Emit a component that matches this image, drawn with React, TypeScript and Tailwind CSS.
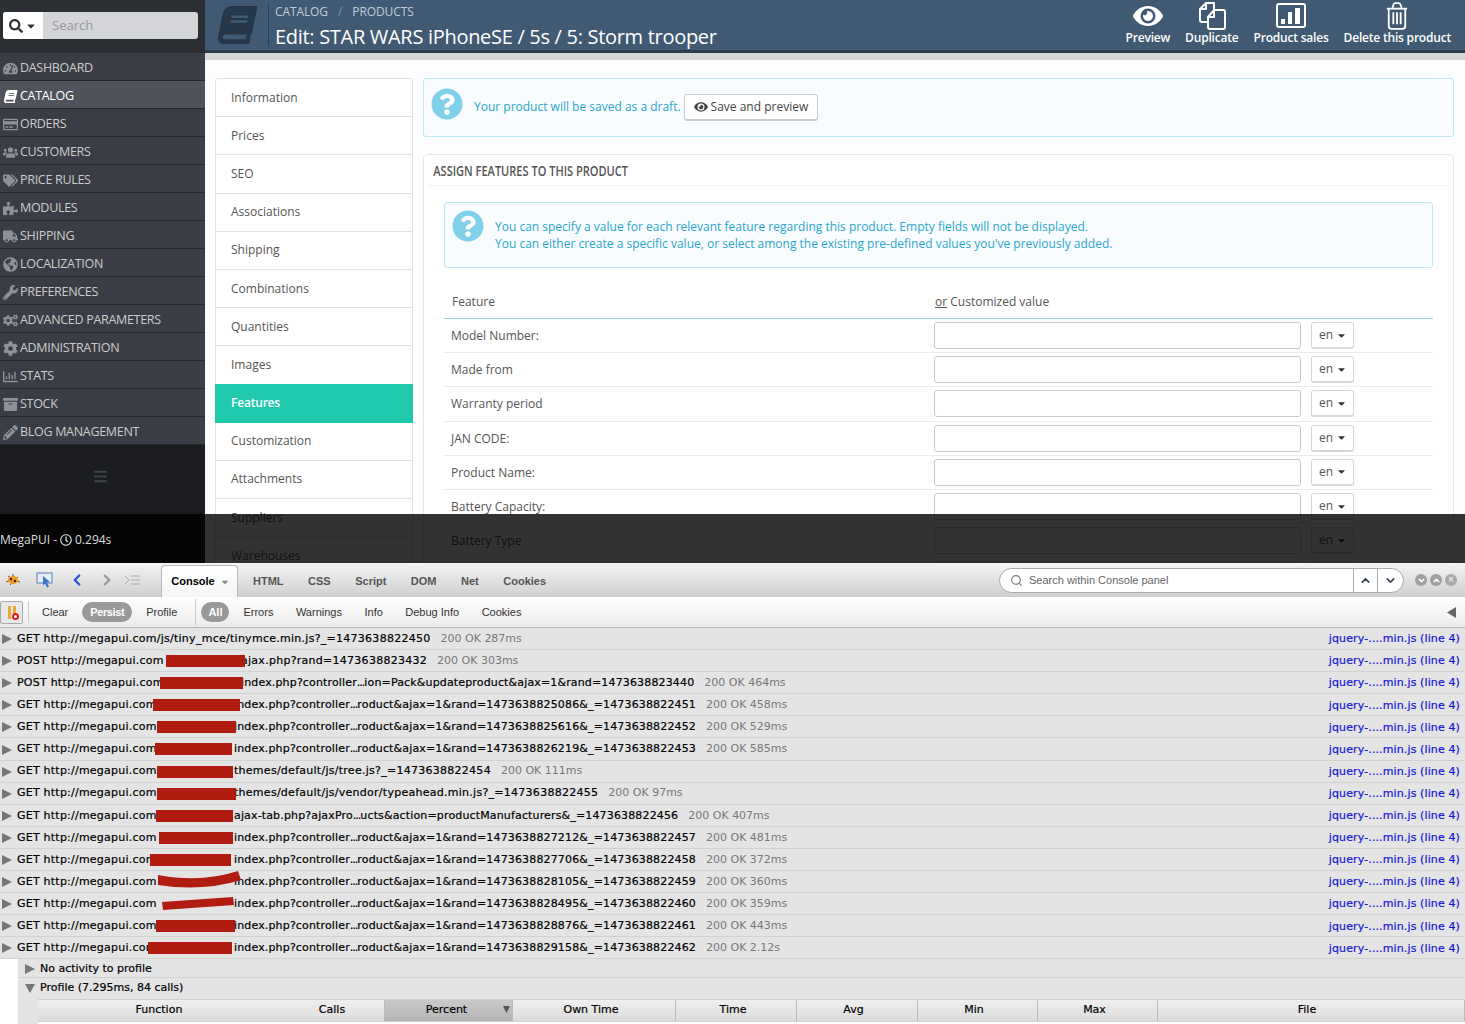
import { FaBook, FaCaretDown, FaCog, FaCogs, FaEye, FaGlobeAmericas, FaPencilAlt, FaPuzzlePiece, FaQuestionCircle, FaRegClock, FaRegCreditCard, FaSearch, FaTachometerAlt, FaTags, FaTruck, FaUsers, FaWrench, FaArchive, FaRegChartBar, FaBars } from 'react-icons/fa';
import { Search, ChevronUp, ChevronDown, ChevronLeft, ChevronRight } from 'lucide-react';

const navItems = [
  { label: 'Dashboard', icon: FaTachometerAlt },
  { label: 'Catalog', icon: FaBook, active: true },
  { label: 'Orders', icon: FaRegCreditCard },
  { label: 'Customers', icon: FaUsers },
  { label: 'Price rules', icon: FaTags },
  { label: 'Modules', icon: FaPuzzlePiece },
  { label: 'Shipping', icon: FaTruck },
  { label: 'Localization', icon: FaGlobeAmericas },
  { label: 'Preferences', icon: FaWrench },
  { label: 'Advanced parameters', icon: FaCogs },
  { label: 'Administration', icon: FaCog },
  { label: 'Stats', icon: FaRegChartBar },
  { label: 'Stock', icon: FaArchive },
  { label: 'Blog management', icon: FaPencilAlt },
];

const tabs = ['Information', 'Prices', 'SEO', 'Associations', 'Shipping', 'Combinations', 'Quantities', 'Images', 'Features', 'Customization', 'Attachments', 'Suppliers', 'Warehouses'];

const features = ['Model Number:', 'Made from', 'Warranty period', 'JAN CODE:', 'Product Name:', 'Battery Capacity:', 'Battery Type', ''];

type LogRow = {
  method: 'GET' | 'POST';
  path: string;
  status: string;
  red?: [number, number];
  scribble?: 'curve' | 'slant';
};

const logRows: LogRow[] = [
  { method: 'GET', path: '/js/tiny_mce/tinymce.min.js?_=1473638822450', status: '200 OK 287ms' },
  { method: 'POST', path: 'ajax.php?rand=1473638823432', status: '200 OK 303ms', red: [166, 245] },
  { method: 'POST', path: 'index.php?controller...ion=Pack&updateproduct&ajax=1&rand=1473638823440', status: '200 OK 464ms', red: [160, 243] },
  { method: 'GET', path: 'index.php?controller...roduct&ajax=1&rand=1473638825086&_=1473638822451', status: '200 OK 458ms', red: [153, 240] },
  { method: 'GET', path: 'index.php?controller...roduct&ajax=1&rand=1473638825616&_=1473638822452', status: '200 OK 529ms', red: [157, 236] },
  { method: 'GET', path: 'index.php?controller...roduct&ajax=1&rand=1473638826219&_=1473638822453', status: '200 OK 585ms', red: [155, 232] },
  { method: 'GET', path: 'themes/default/js/tree.js?_=1473638822454', status: '200 OK 111ms', red: [157, 233] },
  { method: 'GET', path: 'themes/default/js/vendor/typeahead.min.js?_=1473638822455', status: '200 OK 97ms', red: [157, 236] },
  { method: 'GET', path: 'ajax-tab.php?ajaxPro...ucts&action=productManufacturers&_=1473638822456', status: '200 OK 407ms', red: [156, 233] },
  { method: 'GET', path: 'index.php?controller...roduct&ajax=1&rand=1473638827212&_=1473638822457', status: '200 OK 481ms', red: [159, 233] },
  { method: 'GET', path: 'index.php?controller...roduct&ajax=1&rand=1473638827706&_=1473638822458', status: '200 OK 372ms', red: [150, 231] },
  { method: 'GET', path: 'index.php?controller...roduct&ajax=1&rand=1473638828105&_=1473638822459', status: '200 OK 360ms', scribble: 'curve' },
  { method: 'GET', path: 'index.php?controller...roduct&ajax=1&rand=1473638828495&_=1473638822460', status: '200 OK 359ms', scribble: 'slant' },
  { method: 'GET', path: 'index.php?controller...roduct&ajax=1&rand=1473638828876&_=1473638822461', status: '200 OK 443ms', red: [156, 235] },
  { method: 'GET', path: 'index.php?controller...roduct&ajax=1&rand=1473638829158&_=1473638822462', status: '200 OK 2.12s', red: [148, 232] },
];

function Triangle({ down }: { down?: boolean }) {
  return (
    <svg viewBox="0 0 10 10" width="10" height="10" className="shrink-0 fill-[#777]">
      <polygon points={down ? '0,1 10,1 5,10' : '0,0 10,5 0,10'} />
    </svg>
  );
}

function ActionIcon({ kind }: { kind: 'copy' | 'sales' | 'trash' }) {
  if (kind === 'copy') {
    return (
      <svg viewBox="0 0 30 30" width="30" height="30" fill="none" stroke="white" strokeWidth="2" strokeLinejoin="round">
        <path d="M3 19V8l6-6h8v7" />
        <path d="M9 2v6H3" />
        <path d="M3 19q0 2 2 2h6" />
        <path d="M11 16l6-7h9q2 0 2 2v15q0 2-2 2H13q-2 0-2-2z" />
        <path d="M17 9v7h-6" />
      </svg>
    );
  }
  if (kind === 'sales') {
    return (
      <svg viewBox="0 0 30 26" width="30" height="26" fill="none" stroke="white" strokeWidth="2">
        <rect x="1" y="1" width="28" height="23" rx="2" />
        <path d="M5 21v-5h4v5zM12 21V9h4v12zM19 21V5h5v16z" fill="white" stroke="none" />
      </svg>
    );
  }
  return (
    <svg viewBox="0 0 24 30" width="22" height="28" fill="none" stroke="white" strokeWidth="2" strokeLinejoin="round">
      <path d="M1 7h22" />
      <path d="M7 6l1-3q.5-2 2-2h4q1.500 0 2 2l1 3" />
      <path d="M3 7v19q0 3 3 3h12q3 0 3-3V7" />
      <path d="M8 11v13M12 11v13M16 11v13" />
    </svg>
  );
}

function Sidebar() {
  return (
    <aside className="flex w-[205px] shrink-0 flex-col bg-[#1a1c20]">
      <div className="flex h-[53px] items-center bg-[#2b2e33] pb-[2px] pl-[3px]">
        <div className="flex h-[27px] w-[195px] overflow-hidden rounded-[3px] bg-[#d3d5d8]">
          <div className="flex w-[40px] items-center justify-center gap-0.5 bg-white text-[#333]">
            <FaSearch className="size-[14px]" />
            <FaCaretDown className="size-[12px]" />
          </div>
          <span className="pl-[9px] text-[13px] leading-[26px] text-[#999]">Search</span>
        </div>
      </div>
      <nav>
        {navItems.map(({ label, icon: Icon, active }) => (
          <div
            key={label}
            className={`flex h-[28px] items-center border-b border-[#22252a] pt-[3px] uppercase ${active ? 'bg-[#50535c] text-white' : 'bg-[#3a3d45] text-[#ccc]'}`}
          >
            <span className={`flex w-[20px] justify-center ${active ? 'text-white' : 'text-[#8f9196]'}`}>
              <Icon className={active ? 'size-[13px] -skew-x-12' : 'size-[15px]'} />
            </span>
            <span className="text-[12.500px] font-normal tracking-[-0.3px]">{label}</span>
          </div>
        ))}
      </nav>
      <div className="flex justify-center pt-[24px] pr-[5px] text-[#3f4247]">
        <FaBars className="size-[15px]" />
      </div>
    </aside>
  );
}

function PageHeader() {
  return (
    <header>
      <div className="flex h-[50px] items-center bg-[#3f5a72] pr-[14px] text-white">
        <div className="flex w-[63px] justify-center text-[#253748]">
          <FaBook className="size-[38px] -skew-x-12" />
        </div>
        <div className="h-[42px] border-l border-[#2a3f52] pl-[6px]">
          <div className="flex gap-[10px] text-[12px] leading-[16px] tracking-[-0.1px] text-[#c3ccd4] uppercase">
            <span>Catalog</span>
            <span className="text-[#7b8fa1]">/</span>
            <span>Products</span>
          </div>
          <h1 className="mt-[3px] text-[20px] leading-[28px] tracking-[-0.3px]">Edit: STAR WARS iPhoneSE / 5s / 5: Storm trooper</h1>
        </div>
        <div className="ml-auto flex items-end gap-[15px] pb-[4px] text-[12px] font-semibold tracking-[-0.2px]">
          <div className="flex flex-col items-center">
            <FaEye className="h-[30px] w-[30px]" />
            <span className="leading-[14px]">Preview</span>
          </div>
          <div className="flex flex-col items-center">
            <ActionIcon kind="copy" />
            <span className="leading-[14px]">Duplicate</span>
          </div>
          <div className="flex flex-col items-center">
            <ActionIcon kind="sales" />
            <span className="mt-[2px] leading-[14px]">Product sales</span>
          </div>
          <div className="flex flex-col items-center">
            <ActionIcon kind="trash" />
            <span className="mt-[1px] leading-[14px]">Delete this product</span>
          </div>
        </div>
      </div>
      <div className="h-[3px] bg-[#2c3e4f]" />
      <div className="h-[7px] bg-[#d5d6d8]" />
    </header>
  );
}

function TabList() {
  return (
    <div className="w-[198px] shrink-0 self-start rounded-t-[3px] border border-[#e0e3e5] bg-white">
      {tabs.map((t) => (
        <div
          key={t}
          className={`-mx-px flex items-center border-b pl-[16px] text-[12px] ${t === 'Features' ? '-mt-px h-[39.200px] border-[#20c9ac] bg-[#20c9ac] font-semibold tracking-[-0.2px] text-white' : 'h-[38.200px] border-[#e0e3e5] text-[#555]'}`}
        >
          {t}
        </div>
      ))}
    </div>
  );
}

function FeaturesPanel() {
  return (
    <div className="min-w-0 flex-1">
      <div className="flex h-[59px] items-center rounded-[3px] border border-[#bfe8f3] bg-[#f8fcfe] pl-[7px] text-[12px] text-[#2ba6cf]">
        <FaQuestionCircle className="mb-[8px] size-[32px] text-[#81d0ea]" />
        <span className="mb-[1px] ml-[11px]">Your product will be saved as a draft.</span>
        <button className="ml-[3px] flex h-[27px] items-center gap-[3px] rounded-[3px] border border-[#ccc] border-b-2 bg-white px-[9px] text-[#444]">
          <FaEye className="size-[14px] text-[#444]" />
          Save and preview
        </button>
      </div>
      <section className="mt-[17px] rounded-[5px] border border-[#e5e8ea] bg-white px-[4px] pb-[40px]">
        <h2 className="h-[30px] origin-left scale-x-[.76] pl-[7px] text-[14.500px] leading-[32px] font-semibold whitespace-nowrap text-[#555] uppercase">
          Assign features to this product
        </h2>
        <div className="border-t border-[#eef0f1] px-[16px] pt-[16px]">
          <div className="flex h-[66px] rounded-[3px] border border-[#bfe8f3] bg-[#f8fcfe] pt-[7px] pl-[7px] text-[12px] leading-[17px] text-[#2ba6cf]">
            <FaQuestionCircle className="size-[32px] shrink-0 text-[#81d0ea]" />
            <p className="ml-[11px] pt-[8px]">
              You can specify a value for each relevant feature regarding this product. Empty fields will not be displayed.
              <br />
              You can either create a specific value, or select among the existing pre-defined values you've previously added.
            </p>
          </div>
          <div className="mt-[18px] flex h-[33px] items-center border-b border-[#9dd3ea] text-[12px] text-[#555]">
            <span className="w-[483px] pl-[8px]">Feature</span>
            <span className="pl-[8px]"><u>or</u> Customized value</span>
          </div>
          {features.map((f, i) => (
            <div key={i} className="flex h-[34.200px] items-center border-b border-[#ebeded] text-[12px] text-[#555]">
              <span className="w-[490px] pt-[1px] pl-[7px]">{f}</span>
              <input className="h-[27px] w-[367px] rounded-[3px] border border-[#c7c9cb] bg-white" aria-label={f} />
              <button className="ml-[10px] flex h-[27px] w-[43px] items-center justify-center gap-[3px] rounded-[3px] border border-[#d5d7d8] border-b-2 bg-white pl-[1px] text-[#555]">
                {f && 'en'} {f && <FaCaretDown className="size-[11px] text-[#333]" />}
              </button>
            </div>
          ))}
        </div>
      </section>
    </div>
  );
}

function BugIcon() {
  return (
    <svg viewBox="0 0 16 14" width="16" height="14">
      <path d="M1 9l4-2M3 3l3 2M8 1v3M13 4l-3 2M15 9l-4-1M5 12l2-2" stroke="#7a4a14" strokeWidth="1" />
      <ellipse cx="8" cy="7" rx="5" ry="4" fill="#f09a1e" />
      <circle cx="6" cy="6" r="1.200" fill="#3a2006" />
      <circle cx="10" cy="8" r="1.200" fill="#3a2006" />
    </svg>
  );
}

function FirebugBars() {
  const tabNames = ['HTML', 'CSS', 'Script', 'DOM', 'Net', 'Cookies'];
  const filters = ['Errors', 'Warnings', 'Info', 'Debug Info', 'Cookies'];
  return (
    <>
      <div className="flex h-[34px] items-end bg-gradient-to-b from-[#f5f5f5] to-[#cfcfcf] font-['Liberation_Sans',sans-serif] text-[11px]">
        <div className="flex h-[34px] w-[161px] items-center pl-[5px]">
          <BugIcon />
          <svg viewBox="0 0 18 16" width="18" height="16" className="ml-[15px]">
            <rect x="1" y="1" width="15" height="10" fill="#e6edf7" stroke="#5a7fb8" />
            <path d="M7 4l7 6-3 .500 2 4-2 1-2-4-2 2z" fill="#3d76c9" />
          </svg>
          <ChevronLeft className="ml-[14px] size-[18px] text-[#2259c7]" strokeWidth={3} />
          <ChevronRight className="ml-[12px] size-[18px] text-[#999]" strokeWidth={3} />
          <svg viewBox="0 0 16 10" width="16" height="10" className="ml-[8px] stroke-[#aaa]" fill="none">
            <path d="M1 1l4 4-4 4M7 1h9M7 5h9M7 9h9" />
          </svg>
        </div>
        <div className="flex h-[32px] w-[77px] items-center justify-center gap-[5px] rounded-t-[4px] border border-b-0 border-[#bbb] bg-gradient-to-b from-white to-[#f6f6f6] pl-[2px] font-bold text-black">
          Console
          <FaCaretDown className="size-[10px] text-[#888]" />
        </div>
        <div className="flex h-[34px] items-center gap-[24.500px] pt-[2px] pl-[15px] font-bold text-[#555]">
          {tabNames.map((t) => (
            <span key={t}>{t}</span>
          ))}
        </div>
        <div className="ml-auto flex h-[34px] items-center">
          <div className="flex h-[25px] w-[405px] items-center rounded-full border border-[#aaa] bg-white">
            <Search className="ml-[10px] size-[13px] text-[#777]" />
            <span className="ml-[6px] text-[#666]">Search within Console panel</span>
            <span className="ml-auto flex h-full w-[25px] items-center justify-center border-x border-[#aaa]">
              <ChevronUp className="size-[13px] text-[#345]" strokeWidth={3} />
            </span>
            <span className="flex h-full w-[25px] items-center justify-center">
              <ChevronDown className="size-[13px] text-[#345]" strokeWidth={3} />
            </span>
          </div>
          <div className="mr-[8px] ml-[11px] flex gap-[3px]">
            <span className="flex size-[12px] items-center justify-center rounded-full bg-[#a0a0a0]"><ChevronDown className="size-[9px] text-white" strokeWidth={4} /></span>
            <span className="flex size-[12px] items-center justify-center rounded-full bg-[#a0a0a0]"><ChevronUp className="size-[9px] text-white" strokeWidth={4} /></span>
            <span className="flex size-[12px] items-center justify-center rounded-full bg-[#a8a8a8] text-[10px] leading-none text-white">×</span>
          </div>
        </div>
      </div>
      <div className="flex h-[31px] items-center border-b border-[#b5b5b5] bg-gradient-to-b from-white to-[#ebebeb] font-['Liberation_Sans',sans-serif] text-[11px] text-[#333]">
        <div className="flex h-[23px] w-[23px] items-center justify-center gap-[2px] rounded-[2px] border border-[#aaa] bg-[#e8e8e8]">
          <span className="h-[13px] w-[3px] bg-[#eea63a]" />
          <span className="relative h-[13px] w-[3px] bg-[#eea63a]">
            <span className="absolute -bottom-[1px] -left-[1px] size-[7px] rounded-full border-2 border-[#d92020] bg-white" />
          </span>
        </div>
        <span className="ml-[5px] h-[22px] border-l border-[#ccc]" />
        <span className="ml-[13px]">Clear</span>
        <span className="ml-[14px] rounded-full bg-[#999] px-[8px] py-[2px] font-bold tracking-[-0.4px] text-white">Persist</span>
        <span className="ml-[14px]">Profile</span>
        <span className="ml-[18px] h-[26px] border-l border-[#ccc]" />
        <span className="ml-[5px] rounded-full bg-[#999] px-[7px] py-[2px] font-bold text-white">All</span>
        <div className="ml-[14px] flex gap-[22.500px]">
          {filters.map((f) => (
            <span key={f}>{f}</span>
          ))}
        </div>
        <svg viewBox="0 0 10 12" width="9" height="11" className="mr-[9px] ml-auto fill-[#666]">
          <polygon points="10,0 10,12 0,6" />
        </svg>
      </div>
    </>
  );
}

function Redaction({ row }: { row: LogRow }) {
  if (row.scribble === 'curve') {
    return (
      <svg viewBox="0 0 84 22" width="84" height="22" className="absolute top-0 left-[157px]">
        <path d="M1 4Q45 12 81 0L84 9Q45 21 1 14z" fill="#b01c10" />
      </svg>
    );
  }
  if (row.scribble === 'slant') {
    return (
      <svg viewBox="0 0 74 22" width="74" height="22" className="absolute top-0 left-[161px]">
        <path d="M1 9L72 4L73 12L2 17z" fill="#b01c10" />
      </svg>
    );
  }
  if (!row.red) return null;
  return (
    <span
      className="absolute top-[5px] h-[12px] bg-[#b01c10]"
      style={{ left: row.red[0], width: row.red[1] - row.red[0] }}
    />
  );
}

// the "..." in these urls is much narrower in firebug than three dejavu dots
function LogPath({ path }: { path: string }) {
  const parts = path.split('...');
  if (parts.length === 1) return <span className="tracking-[.27px]">{path}</span>;
  return (
    <span className="tracking-[.15px]">
      {parts[0]}
      <span className="tracking-[-1px]">...</span>
      {parts[1]}
    </span>
  );
}

function LogLine({ row }: { row: LogRow }) {
  const hasGap = row.path[0] !== '/';
  return (
    <div className="relative flex h-[22.100px] items-center border-b border-[#d2d2d2] bg-[#e4e4e4] pt-[1px] pl-[2px] font-['DejaVu_Sans',sans-serif] text-[11px] whitespace-nowrap text-black [-webkit-text-stroke:0.2px]">
      <Triangle />
      <span
        className="ml-[5px] inline-block tracking-[.23px]"
        style={hasGap ? { width: row.method === 'GET' ? 217 : 224 } : undefined}
      >
        {row.method} http://megapui.com
      </span>
      <LogPath path={row.path} />
      <span className="ml-[10px] text-[#777] [-webkit-text-stroke:0px]">{row.status}</span>
      <span className="mt-[1px] mr-[5px] ml-auto tracking-[.12px] text-[#1515d6]">jquery-....min.js (line 4)</span>
      <Redaction row={row} />
    </div>
  );
}

function ProfileTable() {
  const cols = [
    { label: 'Function', w: 'w-[242px]' },
    { label: 'Calls', w: 'w-[105px]' },
    { label: 'Percent', w: 'w-[128px] pr-[4px]' },
    { label: 'Own Time', w: 'w-[163px] pr-[6px]' },
    { label: 'Time', w: 'w-[121px] pr-[6px]' },
    { label: 'Avg', w: 'w-[121px] pr-[7px]' },
    { label: 'Min', w: 'w-[120px] pr-[7px]' },
    { label: 'Max', w: 'w-[120px] pr-[6px]' },
    { label: 'File', w: 'flex-1 pr-[8px]' },
  ];
  return (
    <div className="flex h-[66px] font-['DejaVu_Sans',sans-serif] text-[11px] text-black [-webkit-text-stroke:0.2px]">
      <div className="w-[18px] shrink-0 bg-white" />
      <div className="min-w-0 flex-1">
        <div className="flex h-[19px] items-center gap-[5px] border-b border-[#d2d2d2] bg-[#e4e4e4] pt-[1px] pl-[7px]">
          <Triangle />
          No activity to profile
        </div>
        <div className="flex h-[21px] items-center gap-[5px] bg-[#e4e4e4] pb-[1px] pl-[7px]">
          <Triangle down />
          Profile (7.295ms, 84 calls)
        </div>
        <div className="flex h-[26px] bg-[#e4e4e4]">
          <div className="w-[20px] shrink-0" />
          <div className="min-w-0 flex-1">
            <div className="flex h-[23px] border-y border-[#d0d0d0] bg-gradient-to-b from-[#efefef] to-[#dcdcdc]">
              {cols.map((c) => (
                <div
                  key={c.label}
                  className={`relative flex items-center justify-center pb-[2px] ${c.label === 'Function' ? '' : 'border-r border-[#bbb]'} ${c.w} ${c.label === 'Percent' ? 'bg-gradient-to-b from-[#c9c9c9] to-[#b5b5b5]' : ''}`}
                >
                  {c.label}
                  {c.label === 'Percent' && (
                    <svg viewBox="0 0 8 8" width="7" height="7" className="absolute right-[2px] fill-[#555]">
                      <polygon points="0,0 8,0 4,8" />
                    </svg>
                  )}
                </div>
              ))}
            </div>
            <div className="h-[3px] bg-white" />
          </div>
        </div>
      </div>
    </div>
  );
}

export default function App() {
  return (
    <div className="h-[1024px] w-[1465px] overflow-hidden bg-white font-['Open_Sans',sans-serif]">
      <div className="relative flex h-[563px] overflow-hidden">
        <Sidebar />
        <main className="min-w-0 flex-1 bg-[#fcfdfe]">
          <PageHeader />
          <div className="flex gap-[10px] pt-[18px] pr-[11px] pl-[10px]">
            <TabList />
            <FeaturesPanel />
          </div>
        </main>
        <div className="absolute inset-x-0 bottom-0 flex h-[49px] items-center bg-black/80 pt-[2px] text-[12px] text-[#ddd]">
          MegaPUI -<FaRegClock className="mx-[3px] size-[12px]" />0.294s
        </div>
      </div>
      <FirebugBars />
      {logRows.map((row, i) => (
        <LogLine key={i} row={row} />
      ))}
      <ProfileTable />
    </div>
  );
}
